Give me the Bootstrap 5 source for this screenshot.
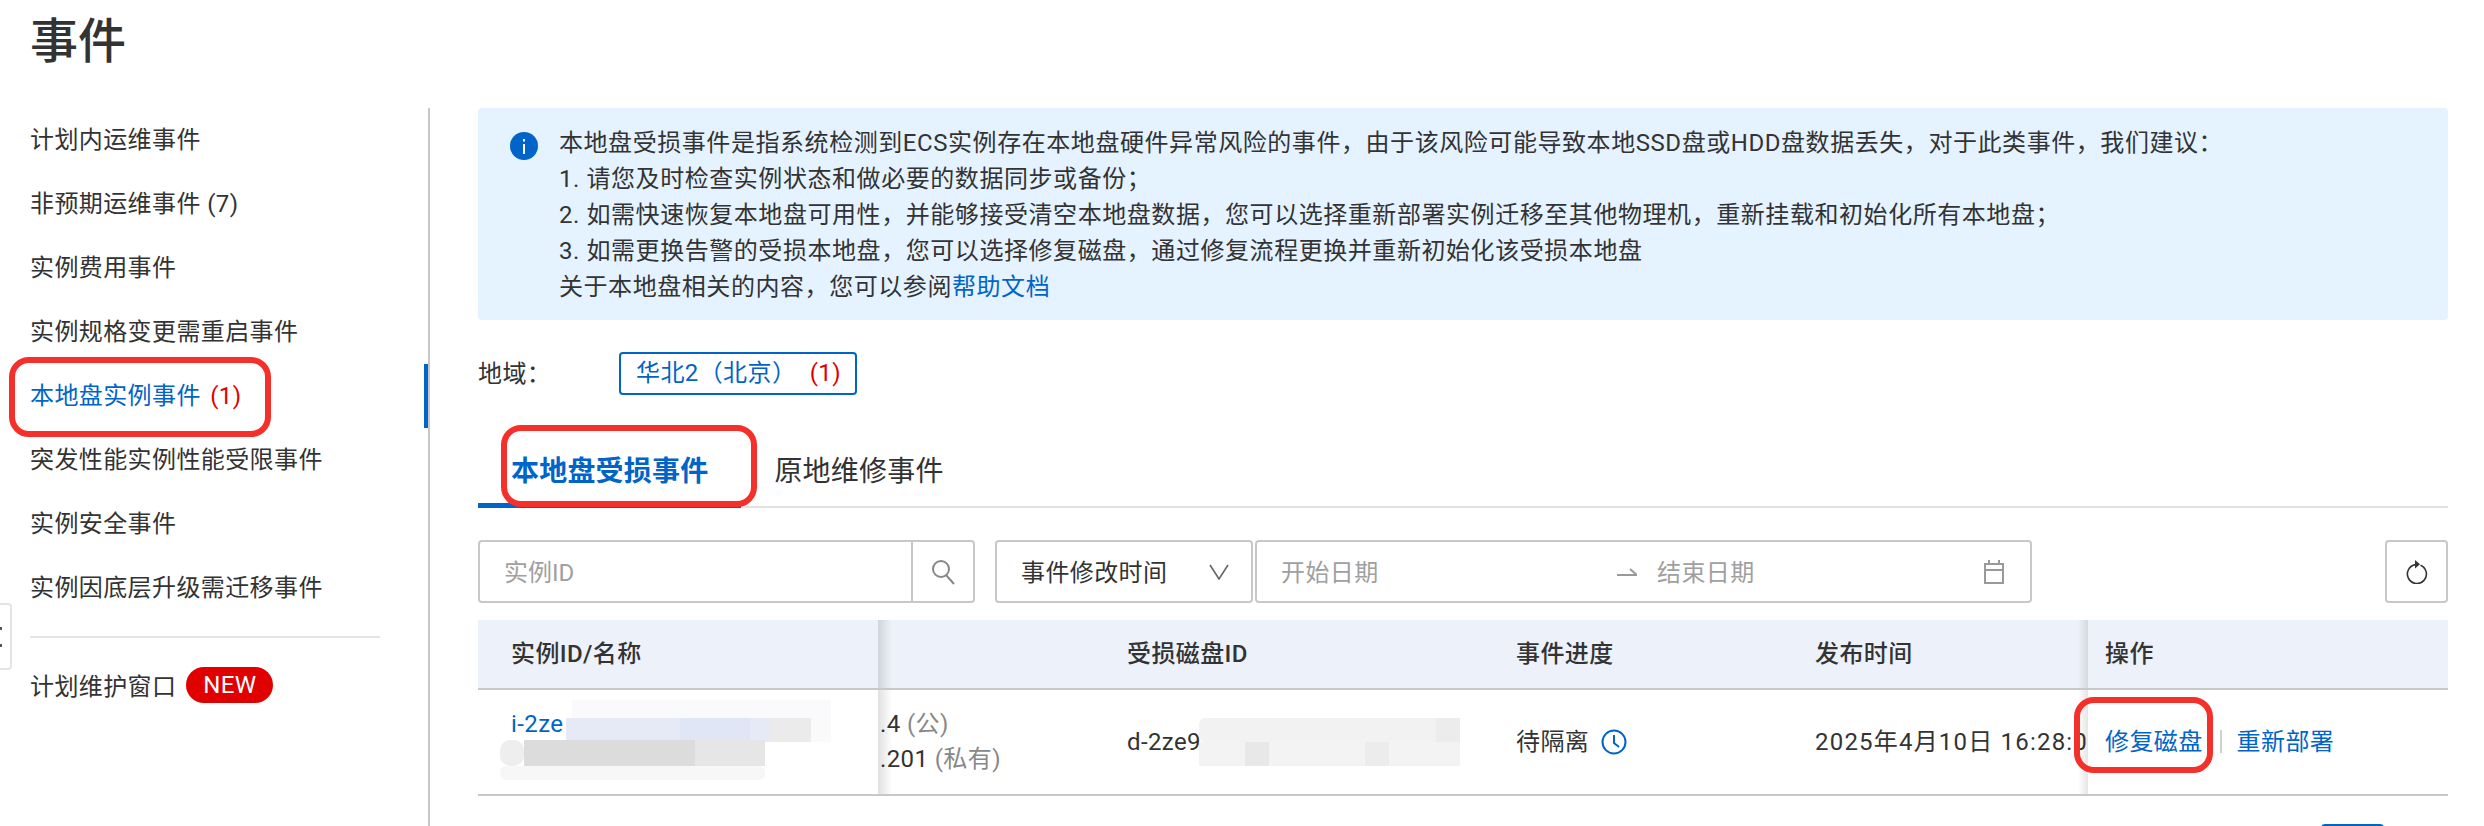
<!DOCTYPE html>
<html lang="zh-CN">

<head>
    <meta charset="UTF-8">
    <meta name="viewport" content="width=device-width, initial-scale=1.0">
    <title>事件</title>
    <link href="https://cdn.jsdelivr.net/npm/bootstrap@5.3.2/dist/css/bootstrap.min.css" rel="stylesheet">
    <style>
        html, body { height: 826px; overflow: hidden; }
        body { position: relative; font-family: Roboto, "Noto Sans CJK SC", sans-serif; font-size: 24px; letter-spacing: .4px; color: #333; background: #fff; }
        a { color: #0064c8; text-decoration: none; }

        /* page head + sidebar */
        .page-head { height: 108px; padding: 14px 0 0 30px; font-size: 48px; line-height: 56px; font-weight: 500; letter-spacing: 0; color: #333; margin: 0; }
        .side-menu { width: 430px; flex: none; border-right: 2px solid #c8c8c8; height: 718px; }
        .side-menu .nav-link { position: relative; height: 64px; line-height: 64px; padding: 0 0 0 30px; color: #333; }
        .side-menu .nav-link.active { color: #0064c8; }
        .side-menu .nav-link.active::after { content: ""; position: absolute; right: 0; top: 0; width: 4px; height: 64px; background: #0064c8; }
        .cnt-red { color: #e00000; margin-left: 3px; }
        .side-rule { width: 350px; margin: 16px 0 17px 30px; border-top: 2px solid #e4e4e4; }
        .new-tag { display: inline-block; width: 87px; height: 36px; line-height: 36px; margin-left: 10px; border-radius: 18px; background: #e00000; color: #fff; text-align: center; font-size: 24px; vertical-align: 2px; }

        /* right side */
        .main-pane { flex: 1; padding-left: 48px; padding-right: 36px; }
        .tip-box { display: flex; height: 212px; margin: 0 0 32px; padding: 17px 0 0 32px; border: 0; border-radius: 4px; background: #e5f2ff; color: #333; line-height: 36px; letter-spacing: .56px; }
        .tip-icon { width: 28px; height: 28px; margin: 7px 21px 0 0; flex: none; }
        .region-label { width: 141px; }
        .region-btn { width: 238px; height: 43px; line-height: 39px; padding: 0 0 0 15px; border: 2px solid #0064c8; border-radius: 4px; color: #0064c8; white-space: nowrap; }
        .region-btn .cnt-red { margin-left: 7px; }
        .ev-tabs { margin-top: 30px; height: 83px; border-bottom: 2px solid #e2e2e2; }
        .ev-tabs .nav-link { height: 83px; padding: 27px 33px 0; font-size: 28px; line-height: 40px; letter-spacing: .2px; color: #333; border: 0; border-radius: 0; }
        .ev-tabs .nav-link.active { color: #0064c8; font-weight: 700; border-bottom: 5px solid #0064c8; }

        .tool-row { margin-top: 32px; height: 63px; }
        .search-group { width: 497px; height: 63px; margin-right: 20px; border: 2px solid #c8c8c8; border-radius: 4px; }
        .search-group input { border: 0; height: 59px; padding: 2px 0 0 24px; font-size: 24px; color: #333; box-shadow: none; }
        .search-group input::placeholder, .date-hint { color: #a0a0a0; }
        .search-btn { width: 62px; flex: none; border-left: 2px solid #c8c8c8; }
        .time-select { width: 258px; height: 63px; margin-right: 2px; padding: 0 22px 0 24px; border: 2px solid #c8c8c8; border-radius: 4px; }
        .time-select span, .date-hint { padding-top: 2px; }
        .date-box { width: 777px; height: 63px; padding: 0 26px 0 24px; border: 2px solid #c8c8c8; border-radius: 4px; }
        .date-to { width: 336px; }
        .date-end { margin-left: 20px; }
        .reload-btn { width: 63px; height: 63px; padding: 0; border: 2px solid #c8c8c8; border-radius: 4px; background: #fff; }

        .ev-table { margin: 17px 0 0; width: 1970px; table-layout: fixed; color: #333; }
        .ev-table th { height: 69px; padding: 0 0 0 33px; vertical-align: middle; font-weight: 500; background: #edf1f9; border-bottom: 2px solid #c8c8c8; white-space: nowrap; overflow: hidden; box-shadow: none; }
        .ev-table td { height: 106px; padding: 0 0 0 33px; vertical-align: middle; border-bottom: 2px solid #c8c8c8; white-space: nowrap; overflow: hidden; line-height: 35px; box-shadow: none; }
        .ev-table .ip-cell { padding-left: 2px; }
        .ev-table .act-cell { padding-left: 17px; }
        .ev-table .time-cell { letter-spacing: 1.2px; }
        .fix-left { position: relative; }
        .fix-left::after { content: ""; position: absolute; top: 0; bottom: 0; left: 0; width: 14px; background: linear-gradient(to right, rgba(0,0,0,.12), rgba(0,0,0,0)); }
        .fix-right::before { content: ""; position: absolute; top: 0; bottom: 0; right: 0; width: 10px; background: linear-gradient(to left, rgba(0,0,0,.1), rgba(0,0,0,0)); }
        .fix-right { position: relative; }
        .muted-tag { color: #888; }
        .clock-ic { width: 26px; height: 26px; margin-left: 12px; vertical-align: -5px; }
        .act-sep { display: inline-block; width: 2px; height: 23px; margin: 0 15px 0 17px; background: #d0d0d0; vertical-align: -3px; }
        .pager-row { margin-top: 28px; }
        .pager-on { width: 63px; height: 40px; background: #0064c8; border-radius: 4px; margin-right: 64px; }

        /* things lying over the page: screenshot marks and mosaics */
        .mark-box { position: absolute; border: 6px solid #f5302a; border-radius: 20px; pointer-events: none; }
        .mark-menu { left: 9px; top: 357px; width: 262px; height: 80px; }
        .mark-tab { left: 501px; top: 425px; width: 256px; height: 82px; }
        .mark-act { left: 2074px; top: 697px; width: 139px; height: 76px; }
        .mosaic { position: absolute; }
        .fold-tab { position: absolute; left: -2px; top: 603px; width: 14px; height: 67px; border: 2px solid #e4e4e4; border-radius: 0 4px 4px 0; background: #fff; }
        .fold-tab::after { content: ""; position: absolute; left: 0; top: 22px; width: 2px; height: 20px; border-top: 3px solid #555; border-bottom: 3px solid #555; }
    </style>
</head>

<body>
    <h1 class="page-head">事件</h1>
    <div class="d-flex">
        <!-- 左侧菜单 -->
        <div class="side-menu">
            <nav class="nav flex-column">
                <a class="nav-link" href="#">计划内运维事件</a>
                <a class="nav-link" href="#">非预期运维事件 (7)</a>
                <a class="nav-link" href="#">实例费用事件</a>
                <a class="nav-link" href="#">实例规格变更需重启事件</a>
                <a class="nav-link active" href="#">本地盘实例事件 <span class="cnt-red">(1)</span></a>
                <a class="nav-link" href="#">突发性能实例性能受限事件</a>
                <a class="nav-link" href="#">实例安全事件</a>
                <a class="nav-link" href="#">实例因底层升级需迁移事件</a>
                <div class="side-rule"></div>
                <a class="nav-link" href="#">计划维护窗口<span class="new-tag">NEW</span></a>
            </nav>
        </div>

        <div class="main-pane">
            <!-- 提示 -->
            <div class="alert tip-box" role="alert">
                <svg class="tip-icon" viewBox="0 0 28 28"><circle cx="14" cy="14" r="14" fill="#0064c8"/><rect x="13" y="12" width="2" height="10" fill="#fff"/><rect x="13" y="7" width="2" height="2.5" fill="#fff"/></svg>
                <div>
                    本地盘受损事件是指系统检测到ECS实例存在本地盘硬件异常风险的事件，由于该风险可能导致本地SSD盘或HDD盘数据丢失，对于此类事件，我们建议：<br>
                    1. 请您及时检查实例状态和做必要的数据同步或备份；<br>
                    2. 如需快速恢复本地盘可用性，并能够接受清空本地盘数据，您可以选择重新部署实例迁移至其他物理机，重新挂载和初始化所有本地盘；<br>
                    3. 如需更换告警的受损本地盘，您可以选择修复磁盘，通过修复流程更换并重新初始化该受损本地盘<br>
                    关于本地盘相关的内容，您可以参阅<a href="#">帮助文档</a>
                </div>
            </div>

            <div class="d-flex align-items-center">
                <div class="region-label">地域：</div>
                <div class="region-btn">华北2（北京） <span class="cnt-red">(1)</span></div>
            </div>

            <ul class="nav ev-tabs">
                <li class="nav-item"><a class="nav-link active" href="#">本地盘受损事件</a></li>
                <li class="nav-item"><a class="nav-link" href="#">原地维修事件</a></li>
            </ul>

            <!-- 筛选 -->
            <div class="d-flex tool-row">
                <div class="d-flex search-group">
                    <input class="form-control" type="text" placeholder="实例ID">
                    <div class="search-btn d-flex align-items-center justify-content-center">
                        <svg width="24" height="26" viewBox="0 0 24 26" fill="none" stroke="#888" stroke-width="2"><circle cx="10" cy="10" r="8"/><path d="M15 16l8 9"/></svg>
                    </div>
                </div>
                <div class="time-select d-flex align-items-center justify-content-between">
                    <span>事件修改时间</span>
                    <svg width="20" height="16" viewBox="0 0 20 16" fill="none" stroke="#666" stroke-width="1.6"><path d="M1 1l9 14 9-14"/></svg>
                </div>
                <div class="date-box d-flex align-items-center">
                    <span class="date-hint date-to">开始日期</span>
                    <svg width="20" height="8" viewBox="0 0 20 8" fill="none" stroke="#999" stroke-width="2"><path d="M0 7h20L13 1"/></svg>
                    <span class="date-hint date-end flex-grow-1">结束日期</span>
                    <svg width="20" height="24" viewBox="0 0 20 24" fill="none" stroke="#999" stroke-width="2"><rect x="1" y="4" width="18" height="19"/><path d="M1 10h18M5 0v4M15 0v4"/></svg>
                </div>
                <button class="reload-btn ms-auto d-flex align-items-center justify-content-center" type="button">
                    <svg width="22" height="24" viewBox="0 0 22 24" fill="none" stroke="#333" stroke-width="1.6"><path d="M14.5 5.2a9.5 9.5 0 1 1-5-.6"/><path d="M9 0l5 4.2-5 4.2z" fill="#333" stroke="none"/></svg>
                </button>
            </div>

            <!-- 表格 -->
            <table class="table ev-table">
                <colgroup>
                    <col style="width:400px"><col style="width:216px"><col style="width:389px"><col style="width:299px"><col style="width:306px"><col style="width:360px">
                </colgroup>
                <thead>
                    <tr>
                        <th>实例ID/名称</th>
                        <th class="fix-left"></th>
                        <th>受损磁盘ID</th>
                        <th>事件进度</th>
                        <th class="fix-right">发布时间</th>
                        <th class="act-cell">操作</th>
                    </tr>
                </thead>
                <tbody>
                    <tr>
                        <td><a href="#">i-2ze</a><br><span>&nbsp;</span></td>
                        <td class="ip-cell fix-left">.4 <span class="muted-tag">(公)</span><br>.201 <span class="muted-tag">(私有)</span></td>
                        <td>d-2ze9</td>
                        <td>待隔离<svg class="clock-ic" viewBox="0 0 26 26" fill="none" stroke="#0064c8" stroke-width="2"><circle cx="13" cy="13" r="11.5"/><path d="M13 6v8l5 4"/></svg></td>
                        <td class="fix-right time-cell">2025年4月10日 16:28:04</td>
                        <td class="act-cell"><a href="#">修复磁盘</a><span class="act-sep"></span><a href="#">重新部署</a></td>
                    </tr>
                </tbody>
            </table>
            <div class="d-flex justify-content-end pager-row"><div class="pager-on"></div></div>
        </div>
    </div>

    <!-- 打码 -->
    <svg class="mosaic" style="left:500px;top:700px" width="340" height="84" viewBox="0 0 340 84">
        <rect x="72" y="0" width="259" height="18" fill="#fafafc"/>
        <rect x="66" y="18" width="204" height="24" fill="#e6eaf6"/>
        <rect x="180" y="18" width="70" height="24" fill="#e0e6f5"/>
        <rect x="270" y="18" width="41" height="24" fill="#ebebeb"/>
        <rect x="311" y="18" width="20" height="24" fill="#fafafa"/>
        <rect x="0" y="40" width="24" height="26" rx="10" fill="#eeeeee"/>
        <rect x="24" y="40" width="171" height="26" fill="#dcdcdc"/>
        <rect x="195" y="40" width="70" height="26" fill="#e6e6e6"/>
        <rect x="0" y="66" width="265" height="14" rx="6" fill="#f7f7f7"/>
    </svg>
    <svg class="mosaic" style="left:1199px;top:718px" width="261" height="48" viewBox="0 0 261 48">
        <rect x="0" y="0" width="261" height="24" rx="6" fill="#f2f2f2"/>
        <rect x="237" y="0" width="24" height="24" fill="#ececec"/>
        <rect x="0" y="24" width="261" height="24" fill="#f3f3f3"/>
        <rect x="46" y="24" width="24" height="24" fill="#e8e8e8"/>
        <rect x="166" y="24" width="24" height="24" fill="#ececec"/>
    </svg>

    <div class="fold-tab"></div>
    <div class="mark-box mark-menu"></div>
    <div class="mark-box mark-tab"></div>
    <div class="mark-box mark-act"></div>

    <script src="https://cdn.jsdelivr.net/npm/bootstrap@5.3.2/dist/js/bootstrap.bundle.min.js"></script>
</body>

</html>
